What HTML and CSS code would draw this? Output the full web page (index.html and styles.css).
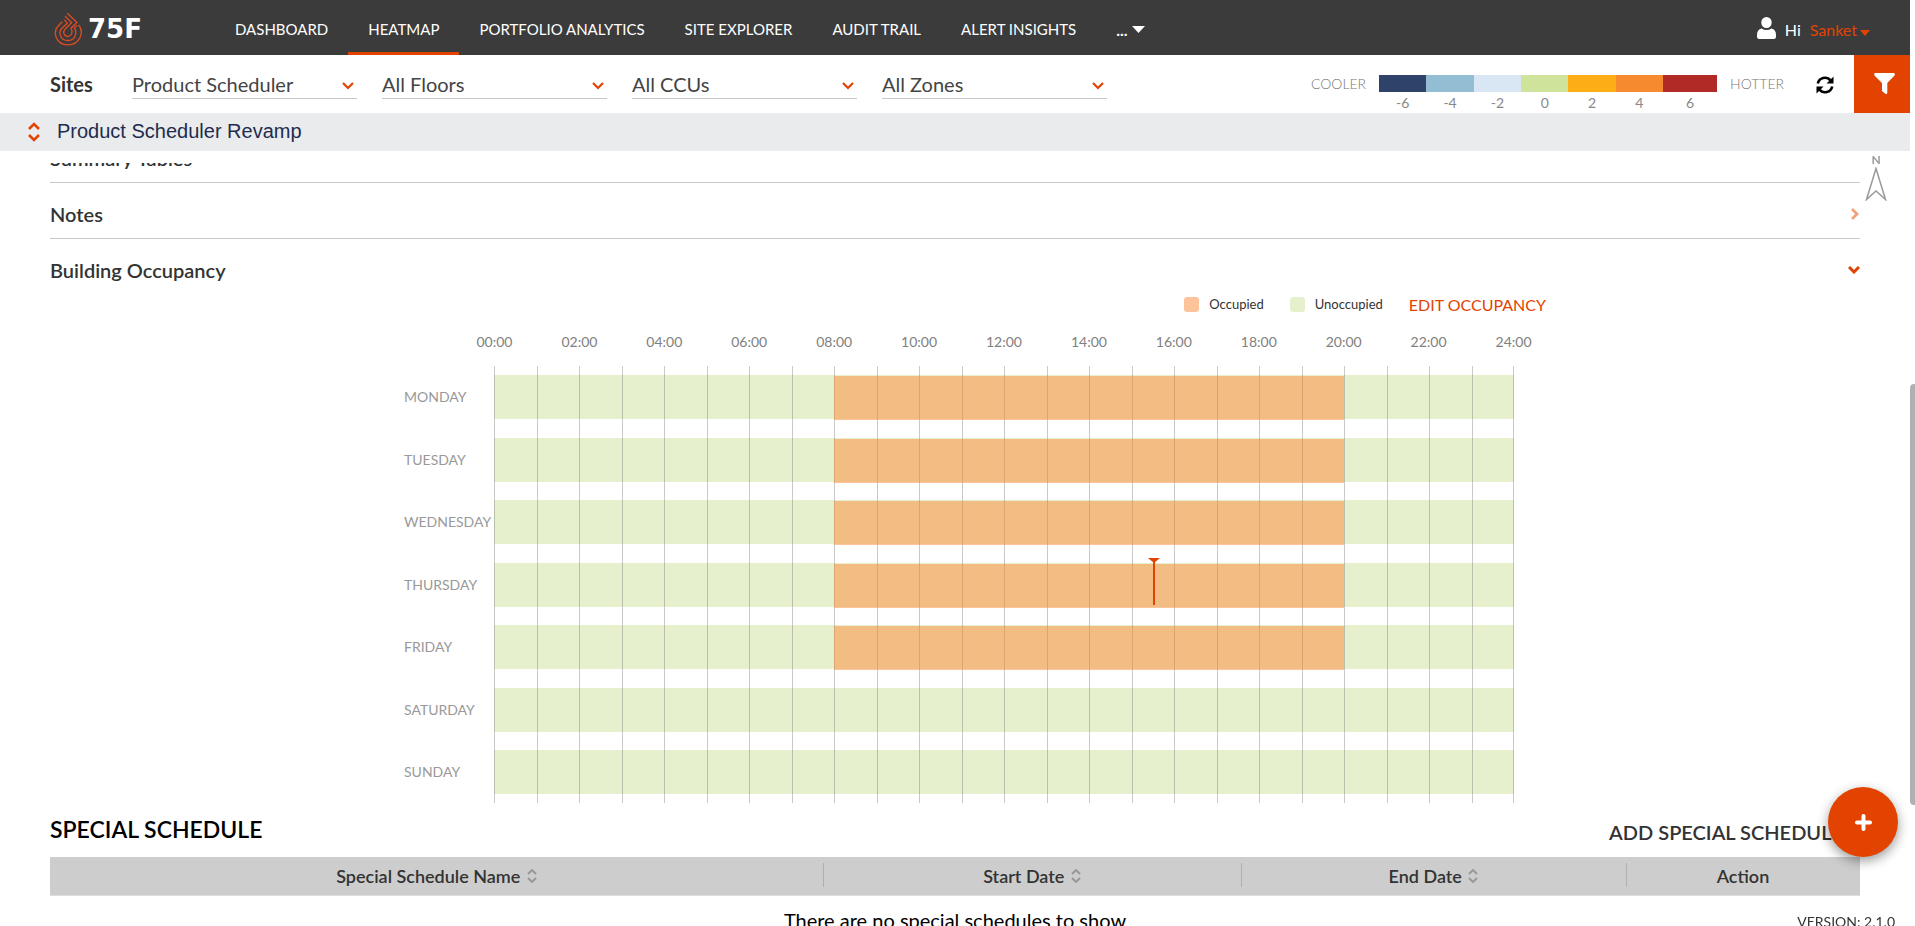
FILE: index.html
```html
<!DOCTYPE html>
<html lang="en">
<head>
  <meta charset="UTF-8" />
  <meta name="viewport" content="width=device-width, initial-scale=1.0" />
  <title>75F - Heatmap</title>
  <link rel="stylesheet" href="styles.css">
</head>
<body>
  <header class="topbar">
    <a href="#" class="logo">
      <svg width="28" height="34" viewBox="-1 -1 84 101" fill="none" stroke="#dd4a24" stroke-width="4">
        <path d="M39 2L68 30L50 47C58 60 50 72 40 72C30 72 24 60 32 50L52 30L32 11" />
        <path d="M30 22L39 32L22 48C10 62 20 84 40 84C62 84 70 62 60 46L69 38" />
        <path d="M24 28L12 40C-6 58 4 97 40 97C78 97 90 58 73 37" />
      </svg>
      <span>75F</span>
    </a>
    <nav class="nav">
      <a href="#">DASHBOARD</a>
      <a href="#" class="active">HEATMAP</a>
      <a href="#">PORTFOLIO ANALYTICS</a>
      <a href="#">SITE EXPLORER</a>
      <a href="#">AUDIT TRAIL</a>
      <a href="#">ALERT INSIGHTS</a>
      <a href="#" class="more">...<svg width="13" height="7" viewBox="0 0 13 7"><path d="M0 0h13L6.500 7z" fill="#fff" /></svg></a>
    </nav>
    <div class="user">
      <svg width="19" height="22" viewBox="0 0 19 22" fill="#fff"><ellipse cx="9.500" cy="5.500" rx="5.200" ry="5.500" /><path d="M4.500 11.500Q9.500 14.500 14.500 11.500Q19 12.500 19 18V19.500Q19 22 16.500 22H2.500Q0 22 0 19.500V18Q0 12.500 4.500 11.500z" /></svg>
      <span>Hi</span>
      <a href="#">Sanket<svg width="10" height="6" viewBox="0 0 10 6"><path d="M0 0h10L5 6z" fill="#e24301" /></svg></a>
    </div>
  </header>

  <!-- Site filters -->
  <div class="filters">
    <label for="site">Sites</label>
    <div class="selects">
      <select id="site"><option>Product Scheduler</option></select>
      <select aria-label="Floors"><option>All Floors</option></select>
      <select aria-label="CCUs"><option>All CCUs</option></select>
      <select aria-label="Zones"><option>All Zones</option></select>
    </div>
    <div class="scale">
      <span class="scale-name">COOLER</span>
      <div class="scale-bar">
        <div class="c1"></div><div class="c2"></div><div class="c3"></div><div class="c4"></div><div class="c5"></div><div class="c6"></div><div class="c7"></div>
        <span>-6</span><span>-4</span><span>-2</span><span>0</span><span>2</span><span>4</span><span>6</span>
      </div>
      <span class="scale-name">HOTTER</span>
    </div>
    <button class="refresh" aria-label="Refresh">
      <svg width="18" height="18" viewBox="0 0 18 18" fill="none" stroke="#000" stroke-width="2.600"><path d="M1.800 7.500A7.200 7.200 0 0 1 14.500 4.500M16.200 10.500A7.200 7.200 0 0 1 3.500 13.500" /><path d="M17.500 0.500V7.500H10.500zM0.500 17.500V10.500H7.500z" fill="#000" stroke="none" /></svg>
    </button>
    <button class="filter-btn" aria-label="Filter">
      <svg width="21" height="21" viewBox="0 0 21 21"><path d="M1 0h19q1.500 1 .5 2.500L13.300 10V20q-.5 1.500-2 .8L8 18V10L.5 2.500Q-.5 1 1 0z" fill="#fff" /></svg>
    </button>
  </div>

  <div class="crumb">
    <svg width="12" height="20" viewBox="0 0 12 20" fill="none" stroke="#e24301" stroke-width="2.600"><path d="M1 7L6 2L11 7M1 13L6 18L11 13" /></svg>
    <span>Product Scheduler Revamp</span>
  </div>

  <main class="content">
    <section class="panel cut">
      <h2>Summary Tables</h2>
      <svg width="12" height="8" viewBox="0 0 12 8" fill="none" stroke="#f3a07d" stroke-width="3"><path d="M1 1l5 5 5-5" /></svg>
    </section>
    <section class="panel">
      <h2>Notes</h2>
      <svg width="10" height="12" viewBox="0 0 10 12" fill="none" stroke="#f3a07d" stroke-width="2.800"><path d="M2 1l5 5-5 5" /></svg>
    </section>
    <section class="panel open">
      <h2>Building Occupancy</h2>
      <svg width="12" height="8" viewBox="0 0 12 8" fill="none" stroke="#e24301" stroke-width="3"><path d="M1 1l5 5 5-5" /></svg>
    </section>

    <!-- Weekly occupancy chart -->
    <div class="chart">
      <div class="legend">
        <span class="key occ">Occupied</span>
        <span class="key unocc">Unoccupied</span>
        <a href="#">EDIT OCCUPANCY</a>
      </div>
      <div class="hours" id="hours"></div>
      <div class="days" id="days"></div>
      <div class="plot">
        <div class="bars" id="bars"></div>
        <div class="lines" id="lines"></div>
      </div>
    </div>

    <!-- Special schedules -->
    <div class="special-head">
      <h1>SPECIAL SCHEDULE</h1>
      <a href="#">ADD SPECIAL SCHEDULE</a>
    </div>
    <table class="special">
      <colgroup><col><col class="w-start"><col class="w-end"><col class="w-action"></colgroup>
      <thead>
        <tr>
          <th>Special Schedule Name <svg width="10" height="14" viewBox="0 0 10 14"><path d="M1 5l4-4 4 4M1 9l4 4 4-4" /></svg></th>
          <th>Start Date <svg width="10" height="14" viewBox="0 0 10 14"><path d="M1 5l4-4 4 4M1 9l4 4 4-4" /></svg></th>
          <th>End Date <svg width="10" height="14" viewBox="0 0 10 14"><path d="M1 5l4-4 4 4M1 9l4 4 4-4" /></svg></th>
          <th>Action</th>
        </tr>
      </thead>
      <tbody>
        <tr><td colspan="4">There are no special schedules to show</td></tr>
      </tbody>
    </table>
  </main>

  <div class="north">
    <span>N</span>
    <svg width="22" height="34" viewBox="0 0 22 34" fill="none" stroke="#999" stroke-width="1.500"><path d="M11 1.500L1.500 32.500L11 24L20.500 32.500z" /></svg>
  </div>
  <button class="fab" aria-label="Add"><svg width="17" height="17" viewBox="0 0 17 17" stroke="#fff" stroke-width="4" stroke-linecap="round"><path d="M8.500 2v13M2 8.500h13" /></svg></button>
  <div class="version">VERSION: 2.1.0</div>
  <div class="scroll-thumb"></div>

  <script>
    const schedule = [
      { day: "MONDAY", from: 8, to: 20 },
      { day: "TUESDAY", from: 8, to: 20 },
      { day: "WEDNESDAY", from: 8, to: 20 },
      { day: "THURSDAY", from: 8, to: 20, now: 15.5 },
      { day: "FRIDAY", from: 8, to: 20 },
      { day: "SATURDAY" },
      { day: "SUNDAY" }
    ];
    const pct = h => (h / 24 * 100) + "%";

    for (let h = 0; h <= 24; h += 2) {
      document.getElementById("hours").innerHTML += `<span>${String(h).padStart(2, "0")}:00</span>`;
    }
    for (let h = 0; h < 24; h++) {
      document.getElementById("lines").innerHTML += "<i></i>";
    }
    schedule.forEach(s => {
      document.getElementById("days").innerHTML += `<span>${s.day}</span>`;
      let bar = "";
      if (s.to) bar += `<div class="busy" style="left:${pct(s.from)};width:${pct(s.to - s.from)}"></div>`;
      if (s.now) bar += `<div class="now" style="left:${pct(s.now)}"></div>`;
      document.getElementById("bars").innerHTML += `<div class="bar">${bar}</div>`;
    });
  </script>
</body>
</html>
```
FILE: styles.css
```css
* { box-sizing: border-box; }
body { font-family: Lato, sans-serif; margin: 0; padding-right: 5px; height: 100vh; overflow: hidden; display: flex; flex-direction: column; background: #fff; color: #333; }
a { text-decoration: none; color: inherit; }
h1, h2 { margin: 0; font-weight: 600; }
svg { flex: none; }
button { border: none; padding: 0; cursor: pointer; display: flex; align-items: center; justify-content: center; }

/* Top bar */
.topbar { flex: none; display: flex; height: 55px; background: #3b3b3b; color: #fff; font-size: 16px; }
.logo { display: flex; align-items: center; gap: 6px; width: 215px; padding: 3px 0 0 54px; font: bold 26px "DejaVu Sans", sans-serif; }
.nav { display: flex; font-size: 15px; }
.nav a { display: flex; align-items: center; padding: 6px 20px 0; border-bottom: 3px solid transparent; white-space: nowrap; }
.nav a.active { border-color: #e24301; }
.nav .more { gap: 4px; font-size: 16px; font-weight: bold; }
.user { display: flex; align-items: center; gap: 9px; margin-left: auto; padding: 4px 40px 0 0; }
.user svg { margin-top: -4px; }
.user a { color: #e24301; }
.user a svg { margin: 0 0 0 3px; }

/* Filters */
.filters { flex: none; display: flex; align-items: center; height: 58px; padding-left: 50px; }
.filters label { width: 82px; font-size: 20px; font-weight: bold; }
.selects { display: flex; gap: 25px; }
.selects select {
  width: 225px; height: 30px; padding: 0; border: none; border-bottom: 1px solid #c8c8c8;
  appearance: none; font: 20px Lato, sans-serif; color: #444;
  background: url("data:image/svg+xml,%3Csvg xmlns='http://www.w3.org/2000/svg' width='12' height='8' fill='none' stroke='%23e24301' stroke-width='2.2'%3E%3Cpath d='M1 1l5 5 5-5'/%3E%3C/svg%3E") no-repeat right 3px top 13px;
}
.scale { display: flex; gap: 13px; margin-left: auto; padding-top: 20px; }
.scale-name { font-size: 14px; font-weight: 300; line-height: 18px; color: #777; }
.scale-bar { display: grid; grid-template-columns: repeat(6, 1fr) 54px; width: 338px; }
.scale-bar div { height: 17px; }
.scale-bar span { font-size: 14px; line-height: 21px; color: #888; text-align: center; }
.c1 { background: #2f4269; }
.c2 { background: #92bdd2; }
.c3 { background: #d9e6f4; }
.c4 { background: #d0e39b; }
.c5 { background: #fdae17; }
.c6 { background: #f68a2f; }
.c7 { background: #b12a25; }
.refresh { width: 18px; height: 58px; margin: 2px 20px 0 32px; background: none; }
.filter-btn { width: 56px; height: 58px; padding: 0 0 2px 5px; background: #e24301; }

.crumb { flex: none; display: flex; align-items: center; gap: 17px; height: 38px; padding: 0 0 2px 28px; background: #e9ebed; color: #1f2c4d; font: 20px "Liberation Sans", sans-serif; }
.crumb svg { margin-top: 2px; }

/* Content, scrolled down a little */
.content { flex: 1; overflow: hidden; margin-top: 12px; padding: 0 50px; min-height: 0; }
.panel { display: flex; align-items: center; justify-content: space-between; height: 56px; border-bottom: 1px solid #c8c8c8; padding-top: 6px; }
.panel h2 { font-size: 20px; }
.panel.cut { margin-top: -36px; }
.panel.open { height: 53px; border: none; padding-top: 8px; }

.chart { display: grid; grid-template-columns: 90px 1fr; max-width: 1118px; margin: 0 auto; padding-left: 8px; }
.legend { grid-column: 1 / 3; display: flex; align-items: center; justify-content: flex-end; gap: 26px; height: 24px; margin-right: -32px; }
.legend a { font-size: 16px; color: #e24301; }
.key { display: flex; align-items: center; gap: 10px; font-size: 13px; }
.key::before { content: ""; width: 15px; height: 15px; border-radius: 3px; background: #fdc49b; }
.key.unocc::before { background: #e6f0cd; }
.hours { grid-column: 2; display: grid; grid-template-columns: repeat(13, 1fr); margin: 17px -42px 16px; text-align: center; font-size: 14px; line-height: 17px; color: #808080; }
.days, .bars { display: flex; flex-direction: column; justify-content: space-between; padding: 9px 0; }
.days { font-size: 14px; color: #999; }
.days span { height: 44px; line-height: 44px; }
.plot { position: relative; height: 437px; }
.bars { height: 100%; }
.bar { position: relative; height: 44px; background: #e6f0cd; }
.busy { position: absolute; z-index: 2; top: 1px; height: 44px; background: rgba(251, 137, 55, .5); }
.now { position: absolute; z-index: 3; top: -5px; width: 2px; height: 47px; background: #e24301; }
.now::before { content: ""; position: absolute; left: -5px; border: 6px solid transparent; border-top: 5px solid #e24301; border-bottom: none; }
.lines { position: absolute; z-index: 1; inset: 0; display: grid; grid-template-columns: repeat(24, 1fr); }
.lines i { border-left: 1px solid rgba(120, 120, 120, .4); }
.lines i:last-child { border-right: 1px solid rgba(120, 120, 120, .4); }

.special-head { display: flex; justify-content: space-between; align-items: flex-end; height: 54px; padding: 0 17px 13px 0; }
.special-head h1 { font-size: 23px; line-height: 30px; color: #000; }
.special-head a { font-size: 20px; font-weight: 600; }
.special { width: 100%; table-layout: fixed; border-collapse: collapse; }
.w-start { width: 418px; }
.w-end { width: 385px; }
.w-action { width: 234px; }
.special th { position: relative; height: 38px; padding: 0; background: #cdcdcd; border-bottom: 1px solid #ddd; font-size: 18px; font-weight: 600; }
.special th + th::before { content: ""; position: absolute; left: 0; top: 6px; height: 24px; border-left: 1px solid #b0b0b0; }
.special th svg { margin-left: 2px; fill: none; stroke: #999; stroke-width: 2; }
.special td { padding: 12px 0; text-align: center; font-size: 20px; color: #000; }

/* Floating bits */
.north { position: fixed; right: 28px; top: 153px; display: flex; flex-direction: column; align-items: center; font-size: 12px; font-weight: bold; line-height: 14px; color: #999; }
.fab { position: fixed; right: 17px; bottom: 69px; width: 70px; height: 70px; border-radius: 50%; background: #e24301; box-shadow: 0 4px 12px rgba(0, 0, 0, .4); }
.version { position: fixed; right: 20px; bottom: -5px; font-size: 14px; line-height: 18px; }
.scroll-thumb { position: fixed; right: 0; top: 384px; width: 5px; height: 421px; border-radius: 4px 0 0 4px; background: #b0b0b0; }
```
